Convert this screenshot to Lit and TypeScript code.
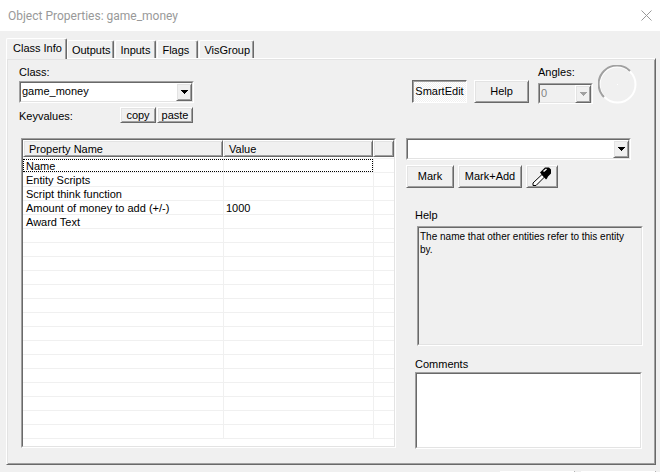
import { LitElement, html, css, nothing } from "lit";
import { customElement, property, state } from "lit/decorators.js";
import { classMap } from "lit/directives/class-map.js";

const bevels = css`
  * { box-sizing: border-box; }
  .sunken {
    border: 1px solid;
    border-color: #a0a0a0 #fff #fff #a0a0a0;
  }
  .sunken-inner {
    border: 1px solid;
    border-color: #696969 #e3e3e3 #e3e3e3 #696969;
  }
  .raised {
    background: #f0f0f0;
    border: 1px solid;
    border-color: #fff #696969 #696969 #fff;
    box-shadow: inset 1px 1px #e3e3e3, inset -1px -1px #a0a0a0;
  }
`;

/** Drop-down list with the classic bevelled arrow button. */
@customElement("combo-box")
export class ComboBox extends LitElement {
  @property() value = "";
  @property() label = "";
  @property({ type: Boolean, reflect: true }) disabled = false;

  static styles = [bevels, css`
    :host { display: block; height: 22px; }
    .sunken { height: 100%; }
    .sunken-inner { height: 100%; display: grid; grid-template-columns: 1fr 16px; background: #fff; }
    select {
      grid-area: 1 / 1 / 2 / 3;
      appearance: none;
      min-width: 0;
      width: 100%;
      margin: 0;
      padding: 0 16px 2px 1px;
      border: 0;
      border-radius: 0;
      outline: 0;
      background: transparent;
      color: #000;
      font: inherit;
      line-height: 16px;
    }
    .arrow { grid-area: 1 / 2; display: grid; place-items: center; pointer-events: none; }
    svg { display: block; }
    :host([disabled]) .sunken-inner { background: #f0f0f0; }
    :host([disabled]) select { color: #838383; opacity: 1; }
    :host([disabled]) svg { color: #a0a0a0; }
  `];

  render() {
    return html`
      <div class="sunken"><div class="sunken-inner">
        <select aria-label=${this.label} ?disabled=${this.disabled}>
          <option>${this.value}</option>
        </select>
        <span class="arrow raised">
          <svg width="7" height="4" viewBox="0 0 7 4" fill="currentColor" shape-rendering="crispEdges">
            <path d="M0 0h7v1h-7zM1 1h5v1h-5zM2 2h3v1h-3zM3 3h1v1h-1z" />
          </svg>
        </span>
      </div></div>`;
  }
}

interface KeyValue { name: string; value: string; }

/** Report-style list of an entity's keyvalues. */
@customElement("property-list")
export class PropertyList extends LitElement {
  @property({ attribute: false }) rows: KeyValue[] = [];
  @property({ type: Number }) capacity = 20;
  @state() private focused = 0;

  static styles = [bevels, css`
    :host { display: block; }
    .sunken-inner { background: #fff; padding-bottom: 7px; }
    table { width: 100%; table-layout: fixed; border-collapse: separate; border-spacing: 0; }
    .name { width: 200px; }
    .spare { width: 21px; }
    th { padding: 0 0 1px; border-bottom: 1px solid #f0f0f0; font-weight: normal; text-align: left; }
    .head { height: 17px; padding-left: 5px; line-height: 17px; }
    td { height: 14px; padding: 0; border-bottom: 1px solid #f0f0f0; }
    td + td { border-left: 1px solid #f0f0f0; }
    .cell { height: 13px; line-height: 15px; padding-left: 3px; white-space: nowrap; }
    td + td .cell { padding-left: 2px; }
    .focused .cell { border: 0 dotted #000; border-width: 1px 0; line-height: 13px; }
    .focused .first { border-left-width: 1px; padding-left: 2px; }
    .focused .second { border-right-width: 1px; }
  `];

  render() {
    const rows = Array.from({ length: this.capacity }, (_, i) => this.rows[i]);
    return html`
      <div class="sunken"><div class="sunken-inner">
        <table>
          <colgroup><col class="name"><col><col class="spare"></colgroup>
          <thead>
            <tr>
              <th scope="col"><div class="head raised">Property Name</div></th>
              <th scope="col"><div class="head raised">Value</div></th>
              <th><div class="head raised"></div></th>
            </tr>
          </thead>
          <tbody>
            ${rows.map((row, i) => html`
              <tr class=${classMap({ focused: i === this.focused })}
                  @click=${() => { if (row) this.focused = i; }}>
                <td><div class="cell first">${row?.name ?? nothing}</div></td>
                <td><div class="cell second">${row?.value ?? nothing}</div></td>
                <td></td>
              </tr>`)}
          </tbody>
        </table>
      </div></div>`;
  }
}

@customElement("app-root")
export class AppRoot extends LitElement {
  @state() private tab = "Class Info";
  @state() private smartEdit = true;

  private readonly tabs = ["Class Info", "Outputs", "Inputs", "Flags", "VisGroup"];
  private readonly rows: KeyValue[] = [
    { name: "Name", value: "" },
    { name: "Entity Scripts", value: "" },
    { name: "Script think function", value: "" },
    { name: "Amount of money to add (+/-)", value: "1000" },
    { name: "Award Text", value: "" },
  ];

  static styles = [bevels, css`
    :host {
      display: flex;
      flex-direction: column;
      height: 100vh;
      overflow: hidden;
      background: #f0f0f0;
      color: #000;
      font: 11px/13px "Liberation Sans", Arial, sans-serif;
    }
    header {
      flex: none;
      display: flex;
      align-items: center;
      justify-content: space-between;
      height: 31px;
      padding: 0 8px;
      background: #fff;
      color: #999;
    }
    h1 { margin: 0; font: 12px/16px Roboto, "Noto Sans", sans-serif; }
    button { margin: 0; padding: 0; border-radius: 0; font: inherit; color: inherit; }
    .close { border: 0; background: none; }
    svg { display: block; }

    nav { flex: none; display: flex; align-items: flex-end; height: 27px; padding-left: 6px; }
    .tab {
      height: 18px;
      min-width: 41px;
      margin-right: 1px;
      padding: 0 3px 0 4px;
      background: #f0f0f0;
      border: 0 solid;
      border-width: 1px 1px 0;
      border-color: #fff #696969 #fff #fff;
      border-radius: 2px 2px 0 0;
      box-shadow: inset -1px 0 #a0a0a0;
      line-height: 18px;
      text-align: left;
      white-space: nowrap;
    }
    .selected { z-index: 1; height: 21px; margin: 0 0 -1px; padding: 0 4px 2px 6px; }

    .panel {
      flex: none;
      display: grid;
      grid-template-columns: 375fr 237fr;
      column-gap: 10px;
      margin: 0 4px 0 6px;
      padding: 6px 12px 15px 14px;
    }
    .left { display: flex; flex-direction: column; min-width: 0; }
    .class-pick { width: 175px; margin-left: -2px; }
    .class-pick label, .angles label { display: block; height: 16px; line-height: 15px; }
    .keys { display: flex; align-items: flex-end; justify-content: space-between; margin-top: 4px; padding-right: 1px; height: 16px; }
    .keys div { display: flex; gap: 1px; }
    .small { width: 36px; height: 16px; line-height: 13px; }
    property-list { margin-top: 15px; }

    .right { display: flex; flex-direction: column; min-width: 0; }
    .tools { display: flex; align-items: flex-start; height: 73px; padding-left: 6px; }
    .btn { height: 23px; }
    .tools .btn { width: 55px; margin: 15px 7px 0 0; }
    .pressed {
      border: 1px solid;
      border-color: #696969 #fff #fff #696969;
      box-shadow: inset 1px 1px #a0a0a0;
      background: repeating-conic-gradient(#fff 0 25%, #f0f0f0 0 50%) 0 0 / 2px 2px;
    }
    .angles { width: 55px; margin-left: 2px; }
    .angles combo-box { margin-top: 2px; height: 21px; }
    .dial { margin-left: 5px; }
    .marks { display: flex; gap: 4px; margin-top: 5px; }
    .value { margin-right: 12px; }
    .mark { width: 48px; }
    .add { width: 64px; }
    .pick { width: 32px; display: grid; place-items: center; }
    h2, .comments label { margin: 0 0 0 9px; font: inherit; }
    h2 { margin-top: 21px; }
    .help { margin: 4px 0 0 11px; }
    .help p { margin: 0; height: 118px; padding: 2px 8px 2px 1px; font-size: 10px; }
    .comments { display: flex; flex-direction: column; margin-top: 12px; }
    .comments .sunken { margin: 1px 1px 0 9px; }
    textarea { display: block; width: 100%; height: 75px; margin: 0; padding: 2px; resize: none; outline: 0; border-radius: 0; background: #fff; font: inherit; }

    footer { flex: none; display: flex; justify-content: flex-end; gap: 6px; padding: 6px 4px 6px 0; }
    footer .btn { width: 75px; }
  `];

  render() {
    return html`
      <header>
        <h1>Object Properties: game_money</h1>
        <button class="close" aria-label="Close">
          <svg width="11" height="11" viewBox="0 0 11 11" fill="none" stroke="#999"><path d="M.5.5l10 10M10.5.5l-10 10" /></svg>
        </button>
      </header>
      <nav role="tablist">
        ${this.tabs.map((t) => html`
          <button role="tab" aria-selected=${t === this.tab}
            class=${classMap({ tab: true, selected: t === this.tab })}
            @click=${() => { this.tab = t; }}>${t}</button>`)}
      </nav>
      <main class="panel raised">
        <section class="left">
          <div class="class-pick">
            <label>Class:</label>
            <combo-box label="Class" value="game_money"></combo-box>
            <div class="keys">
              <span>Keyvalues:</span>
              <div><button class="small raised">copy</button><button class="small raised">paste</button></div>
            </div>
          </div>
          <property-list .rows=${this.rows}></property-list>
        </section>
        <section class="right">
          <div class="tools">
            <button class=${classMap({ btn: true, raised: !this.smartEdit, pressed: this.smartEdit })}
              aria-pressed=${this.smartEdit}
              @click=${() => { this.smartEdit = !this.smartEdit; }}>SmartEdit</button>
            <button class="btn raised">Help</button>
            <div class="angles">
              <label>Angles:</label>
              <combo-box label="Angles" value="0" disabled></combo-box>
            </div>
            <svg class="dial" width="39" height="39" viewBox="0 0 39 39" fill="none" stroke-width="2">
              <circle cx="19.5" cy="19.5" r="18" stroke="#fff" />
              <path d="M6 32A18 18 0 0 1 32 6" stroke="#a0a0a0" />
              <path d="M19 19h1v1h-1z" fill="#fff" />
            </svg>
          </div>
          <combo-box class="value" label="Value"></combo-box>
          <div class="marks">
            <button class="btn mark raised">Mark</button>
            <button class="btn add raised">Mark+Add</button>
            <button class="btn pick raised" aria-label="Pick entity">
              <svg width="20" height="20" viewBox="0 0 20 20">
                <path d="M1 18.500V16L10 7.500l2.500 2.500L4 18.500z" fill="#fff" stroke="#000" />
                <path d="M8 5.500l2-2 3-3h4l2 2v4l-3 3-1 2-1 1z" fill="#000" />
                <path d="M11.500 4.500l3-2.500" stroke="#fff" stroke-width="1.500" />
              </svg>
            </button>
          </div>
          <h2>Help</h2>
          <div class="help sunken"><p class="sunken-inner">The name that other entities refer to this entity by.</p></div>
          <div class="comments">
            <label for="comments">Comments</label>
            <div class="sunken"><textarea id="comments" class="sunken-inner"></textarea></div>
          </div>
        </section>
      </main>
      <footer>
        <button class="btn raised" aria-label="Cancel"></button>
        <button class="btn raised" aria-label="Apply"></button>
      </footer>`;
  }
}
